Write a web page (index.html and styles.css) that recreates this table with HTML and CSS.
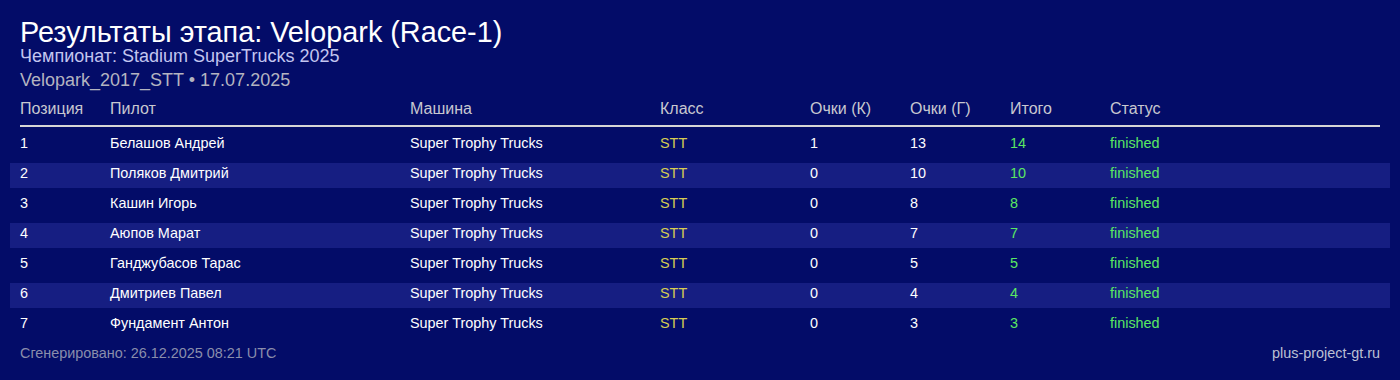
FILE: index.html
```html
<!DOCTYPE html>
<html lang="ru">
<head>
<meta charset="utf-8">
<title>Результаты этапа</title>
<link rel="stylesheet" href="styles.css">
</head>
<body>
<main class="page">
  <h1 class="title">Результаты этапа: Velopark (Race-1)</h1>
  <div class="champ">Чемпионат: Stadium SuperTrucks 2025</div>
  <div class="meta">Velopark_2017_STT • 17.07.2025</div>

  <div class="table">
    <div class="row head">
      <span>Позиция</span><span>Пилот</span><span>Машина</span><span>Класс</span><span>Очки (К)</span><span>Очки (Г)</span><span>Итого</span><span>Статус</span>
    </div>
    <div class="body">
      <div class="row"><span>1</span><span>Белашов Андрей</span><span>Super Trophy Trucks</span><span class="cls">STT</span><span>1</span><span>13</span><span class="ok">14</span><span class="ok">finished</span></div>
      <div class="row alt"><span>2</span><span>Поляков Дмитрий</span><span>Super Trophy Trucks</span><span class="cls">STT</span><span>0</span><span>10</span><span class="ok">10</span><span class="ok">finished</span></div>
      <div class="row"><span>3</span><span>Кашин Игорь</span><span>Super Trophy Trucks</span><span class="cls">STT</span><span>0</span><span>8</span><span class="ok">8</span><span class="ok">finished</span></div>
      <div class="row alt"><span>4</span><span>Аюпов Марат</span><span>Super Trophy Trucks</span><span class="cls">STT</span><span>0</span><span>7</span><span class="ok">7</span><span class="ok">finished</span></div>
      <div class="row"><span>5</span><span>Ганджубасов Тарас</span><span>Super Trophy Trucks</span><span class="cls">STT</span><span>0</span><span>5</span><span class="ok">5</span><span class="ok">finished</span></div>
      <div class="row alt"><span>6</span><span>Дмитриев Павел</span><span>Super Trophy Trucks</span><span class="cls">STT</span><span>0</span><span>4</span><span class="ok">4</span><span class="ok">finished</span></div>
      <div class="row"><span>7</span><span>Фундамент Антон</span><span>Super Trophy Trucks</span><span class="cls">STT</span><span>0</span><span>3</span><span class="ok">3</span><span class="ok">finished</span></div>
    </div>
  </div>

  <footer class="footer">
    <span class="gen">Сгенерировано: 26.12.2025 08:21 UTC</span>
    <span class="site">plus-project-gt.ru</span>
  </footer>
</main>
</body>
</html>
```

FILE: styles.css
```css
html, body {
  margin: 0;
  padding: 0;
  background: #030c68;
  height: 100%;
}

body {
  font-family: Arial, "Liberation Sans", sans-serif;
  color: #ffffff;
}

.page {
  padding: 17px 20px 0;
}

.title {
  margin: 0;
  font-size: 28.8px;
  font-weight: normal;
  line-height: 30px;
  color: #ffffff;
}

.champ {
  font-size: 18px;
  line-height: 18px;
  color: #c3c6f0;
}

.meta {
  margin-top: 5px;
  font-size: 18px;
  line-height: 20px;
  color: #b4b4c0;
}

.table {
  margin-top: 10px;
}

.row {
  display: grid;
  grid-template-columns: 90px 300px 250px 150px 100px 100px 100px 1fr;
}

.head {
  font-size: 16px;
  line-height: 18px;
  color: #c8c8d0;
  padding-bottom: 7px;
  border-bottom: 2px solid #d6d6d6;
}

.body {
  padding-top: 1px;
}

.body .row {
  margin: 0 -10px;
  padding: 0 10px 5px;
  border-top: 5px solid transparent;
  background-clip: padding-box;
  font-size: 14.4px;
  line-height: 20px;
  color: #ffffff;
}

.body .row.alt {
  background-color: #161e82;
}

.cls {
  color: #d6cc52;
}

.ok {
  color: #5ae862;
}

.footer {
  margin-top: 7px;
  display: flex;
  justify-content: space-between;
  font-size: 14.4px;
  line-height: 16px;
}

.gen {
  color: #8a8eac;
}

.site {
  color: #bcc0d4;
}
```
